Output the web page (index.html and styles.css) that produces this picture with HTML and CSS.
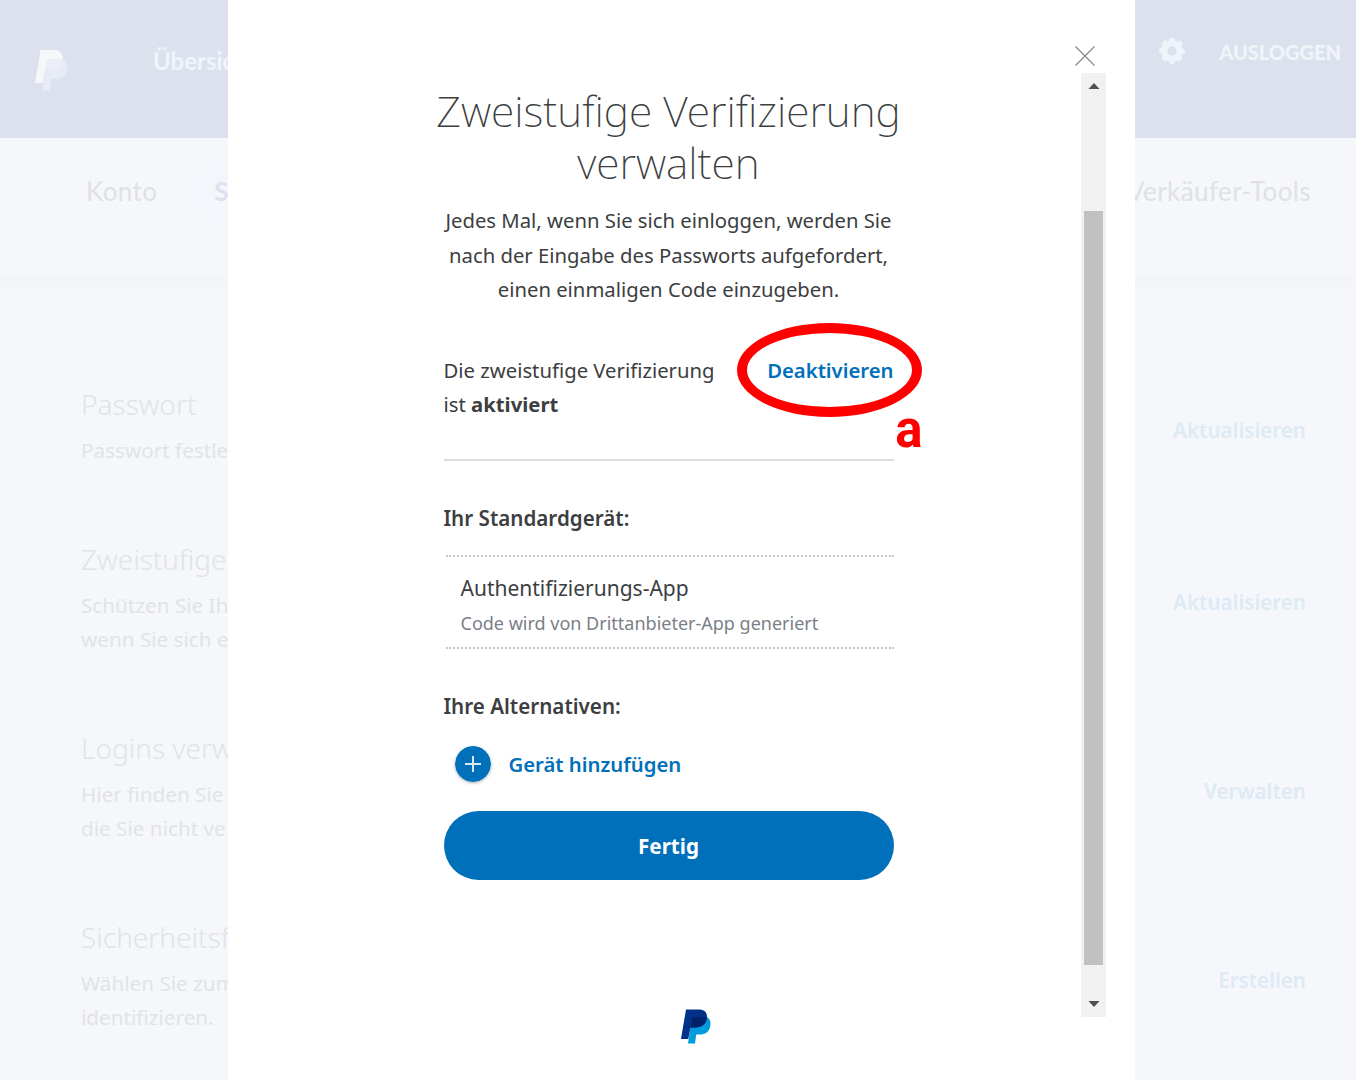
FILE: index.html
```html
<!DOCTYPE html>
<html lang="de">
<head>
  <meta charset="UTF-8">
  <title>Zweistufige Verifizierung</title>
  <link rel="stylesheet" href="styles.css">
</head>
<body>

  <div class="page">
    <header class="topbar">
      <svg class="topbar-logo" viewBox="0 0 33 41">
        <path d="M5.5 0H19c6 0 9.5 4 8.500 10-1 7-6 10.500-13 10.500H10L8 33H0z" fill="#f6f7fb"/>
        <path d="M12 9h15c4 1.500 6 5 5 10-1 7-5.500 10-12 10h-3.500L15 41H7.500z" fill="#e9ecf5" fill-opacity=".85"/>
      </svg>
      <span class="topbar-link">Übersic</span>
      <svg class="topbar-gear" viewBox="0 0 26 26">
        <circle cx="13" cy="13" r="7.700" fill="none" stroke="#eff4fa" stroke-width="6"/>
        <circle cx="13" cy="13" r="11" fill="none" stroke="#eff4fa" stroke-width="4" stroke-linecap="round" stroke-dasharray="2 6.640" stroke-dashoffset="1"/>
      </svg>
      <span class="logout">AUSLOGGEN</span>
    </header>

    <nav class="tabs">
      <span class="tab">Konto</span>
      <span class="tab active">S</span>
      <span class="tab last">Verkäufer-Tools</span>
    </nav>

    <main class="settings">
      <div class="row first">
        <div class="row-text">
          <h3>Passwort</h3>
          <p>Passwort festle</p>
        </div>
        <a class="row-link">Aktualisieren</a>
      </div>
      <div class="row">
        <div class="row-text">
          <h3>Zweistufige</h3>
          <p>Schützen Sie Ih<br>wenn Sie sich ei</p>
        </div>
        <a class="row-link">Aktualisieren</a>
      </div>
      <div class="row">
        <div class="row-text">
          <h3>Logins verw</h3>
          <p>Hier finden Sie<br>die Sie nicht ve</p>
        </div>
        <a class="row-link">Verwalten</a>
      </div>
      <div class="row">
        <div class="row-text">
          <h3>Sicherheitsf</h3>
          <p>Wählen Sie zum<br>identifizieren.</p>
        </div>
        <a class="row-link">Erstellen</a>
      </div>
    </main>
  </div>

  <div class="modal">
    <svg class="close" viewBox="0 0 20 20">
      <path d="M.5.5l19 19M19.500.5l-19 19" stroke="#8a8a8a" stroke-width="1.300"/>
    </svg>

    <div class="modal-scroll">
      <div class="modal-content">
        <h1><span>Zweistufige Verifizierung</span><span>verwalten</span></h1>
        <p class="intro">Jedes Mal, wenn Sie sich einloggen, werden Sie<br>nach der Eingabe des Passworts aufgefordert,<br>einen einmaligen Code einzugeben.</p>

        <div class="status">
          <p>Die zweistufige Verifizierung<br>ist <b>aktiviert</b></p>
          <div class="disable">
            <a>Deaktivieren</a>
            <span class="marker"></span>
            <span class="marker-label">a</span>
          </div>
        </div>

        <h2 class="device-title">Ihr Standardgerät:</h2>
        <div class="device">
          <p class="device-name">Authentifizierungs-App</p>
          <p class="device-info">Code wird von Drittanbieter-App generiert</p>
        </div>

        <h2 class="alt-title">Ihre Alternativen:</h2>
        <a class="add-device">
          <svg class="plus" viewBox="0 0 36 36">
            <circle cx="18" cy="18" r="18" fill="#0070ba"/>
            <path d="M18 10v16M10 18h16" stroke="#d9eaf6" stroke-width="2"/>
          </svg>
          <span>Gerät hinzufügen</span>
        </a>
        <button class="done">Fertig</button>
      </div>

      <div class="scrollbar">
        <svg class="arrow" viewBox="0 0 12 6"><path d="M6 0l5.500 6H.5z" fill="#505050"/></svg>
        <div class="thumb"></div>
        <svg class="arrow" viewBox="0 0 12 6"><path d="M6 6L.5 0h11z" fill="#505050"/></svg>
      </div>
    </div>

    <svg class="modal-logo" viewBox="0 0 30 35">
      <path d="M11 8h15c3 1.500 4 4.500 3.300 9-1.200 6.200-5 8.500-10.800 8.500h-3.300L14 34.500H7z" fill="#009cde"/>
      <path d="M5 .5h12.500c6.500 0 9.300 3.500 8.200 9-1.200 6.500-5.700 9-12 9H9.500L7.300 30H0z" fill="#003087"/>
      <path d="M11.300 8.300h14.500c0 7-4.700 10.200-12.100 10.200H9.600z" fill="#012169"/>
    </svg>
  </div>

</body>
</html>
```

FILE: styles.css
```css
* {
  box-sizing: border-box;
}
body {
  margin: 0;
  height: 1080px;
  overflow: hidden;
  font-family: "Noto Sans", "Open Sans", sans-serif;
  font-size: 20.3px;
  line-height: 34.6px;
  color: #3c3e3f;
  background-color: #f5f7fb;
}
h1, h2, h3, p {
  margin: 0;
}
.topbar {
  height: 138px;
  display: flex;
  background-color: #dde1ed;
  padding: 50px 15px 0 35px;
  font-family: Lato, sans-serif;
  color: #f0f5fa;
}
.topbar-logo {
  width: 33px;
  height: 41px;
}
.topbar-link {
  margin: -6px auto 0 85px;
  font-size: 24px;
  font-weight: bold;
}
.topbar-gear {
  width: 26px;
  height: 26px;
  margin: -12px 34px 0 0;
}
.logout {
  margin-top: -15px;
  font-size: 20px;
  font-weight: 900;
}
.tabs {
  height: 138px;
  display: flex;
  align-items: flex-start;
  padding: 17px 45px 0 86px;
  font-family: Lato, sans-serif;
  font-size: 26px;
  line-height: 72px;
  letter-spacing: 0.4px;
  color: #dfe1e5;
  background-color: #f5f7fa;
  box-shadow: 0 14px 6px -2px #f3f4f7;
}
.tab.active {
  width: 180px;
  margin-left: 33px;
  padding-left: 24px;
  border-radius: 36px;
  font-weight: bold;
  color: #dee1ed;
  background-color: #f3f7fb;
}
.tab.last {
  margin-left: auto;
}
.settings {
  margin: 69px 28px 0 80px;
}
.row {
  height: 189px;
  display: flex;
  align-items: center;
  justify-content: space-between;
  padding-right: 22px;
  border-bottom: 2px solid #f3f5f8;
  color: #e1e3e7;
}
.row.first {
  height: 155px;
}
.row-text {
  align-self: flex-start;
  padding: 42px 0 0 1px;
  font-size: 20.7px;
}
.row h3 {
  margin-bottom: 11px;
  font-size: 28px;
  font-weight: 300;
}
.row-link {
  padding-top: 18px;
  font-size: 20.6px;
  font-weight: 600;
  color: #deeaf4;
}
.modal {
  position: fixed;
  top: 0;
  left: 228px;
  width: 907px;
  height: 1080px;
  padding: 46px 29px 0 28px;
  display: flex;
  flex-direction: column;
  background-color: #fff;
}
.close {
  width: 20px;
  height: 20px;
  margin: 0 11px 7px auto;
}
.modal-scroll {
  height: 944px;
  display: flex;
}
.modal-content {
  width: 450px;
  margin: 12px auto 0;
}
h1 {
  margin: 0 -30px 14px;
  font-size: 42.7px;
  font-weight: 200;
  line-height: 52px;
  text-align: center;
}
h1 span {
  display: block;
}
.intro {
  margin: 0 -20px;
  text-align: center;
}
.status {
  height: 108px;
  display: flex;
  justify-content: space-between;
  margin-top: 46px;
  border-bottom: 2px solid #d9dee3;
}
.disable {
  position: relative;
}
.disable a, .add-device {
  font-weight: 600;
  color: #0070ba;
}
.marker {
  position: absolute;
  top: -30px;
  right: -28px;
  width: 185px;
  height: 94px;
  border: 10px solid #f00;
  border-radius: 50%;
}
.marker-label {
  position: absolute;
  top: 60px;
  right: -29px;
  font-family: Roboto, sans-serif;
  font-size: 51px;
  font-weight: bold;
  color: #f00;
}
h2 {
  font-size: 20.6px;
  font-weight: 600;
}
.device-title {
  margin-top: 40px;
}
.device {
  height: 94px;
  margin: 20px 0 0 2px;
  padding: 14px 0 0 15px;
  border-top: 2px dotted #c4c7ca;
  border-bottom: 2px dotted #c4c7ca;
}
.device-name {
  font-size: 21px;
}
.device-info {
  font-size: 18px;
  color: #7a8087;
}
.alt-title {
  margin-top: 40px;
}
.add-device {
  display: flex;
  align-items: center;
  gap: 18px;
  margin: 22px 0 0 11px;
}
.plus {
  width: 36px;
  height: 36px;
  border-radius: 50%;
  box-shadow: 0 1px 3px rgba(0,0,0,0.3);
}
.done {
  width: 450px;
  height: 69px;
  margin-top: 29px;
  padding-top: 3px;
  border: none;
  border-radius: 35px;
  background-color: #0070ba;
  color: #fff;
  font: bold 20.6px "Noto Sans", sans-serif;
}
.scrollbar {
  width: 25px;
  display: flex;
  flex-direction: column;
  align-items: center;
  justify-content: space-between;
  padding: 10px 0;
  background-color: #f1f1f1;
}
.arrow {
  width: 12px;
  height: 6px;
}
.thumb {
  width: 19px;
  height: 754px;
  margin-top: 86px;
  background-color: #c1c1c1;
}
.modal-logo {
  width: 30px;
  height: 35px;
  margin: -8px 0 0 425px;
}
```
